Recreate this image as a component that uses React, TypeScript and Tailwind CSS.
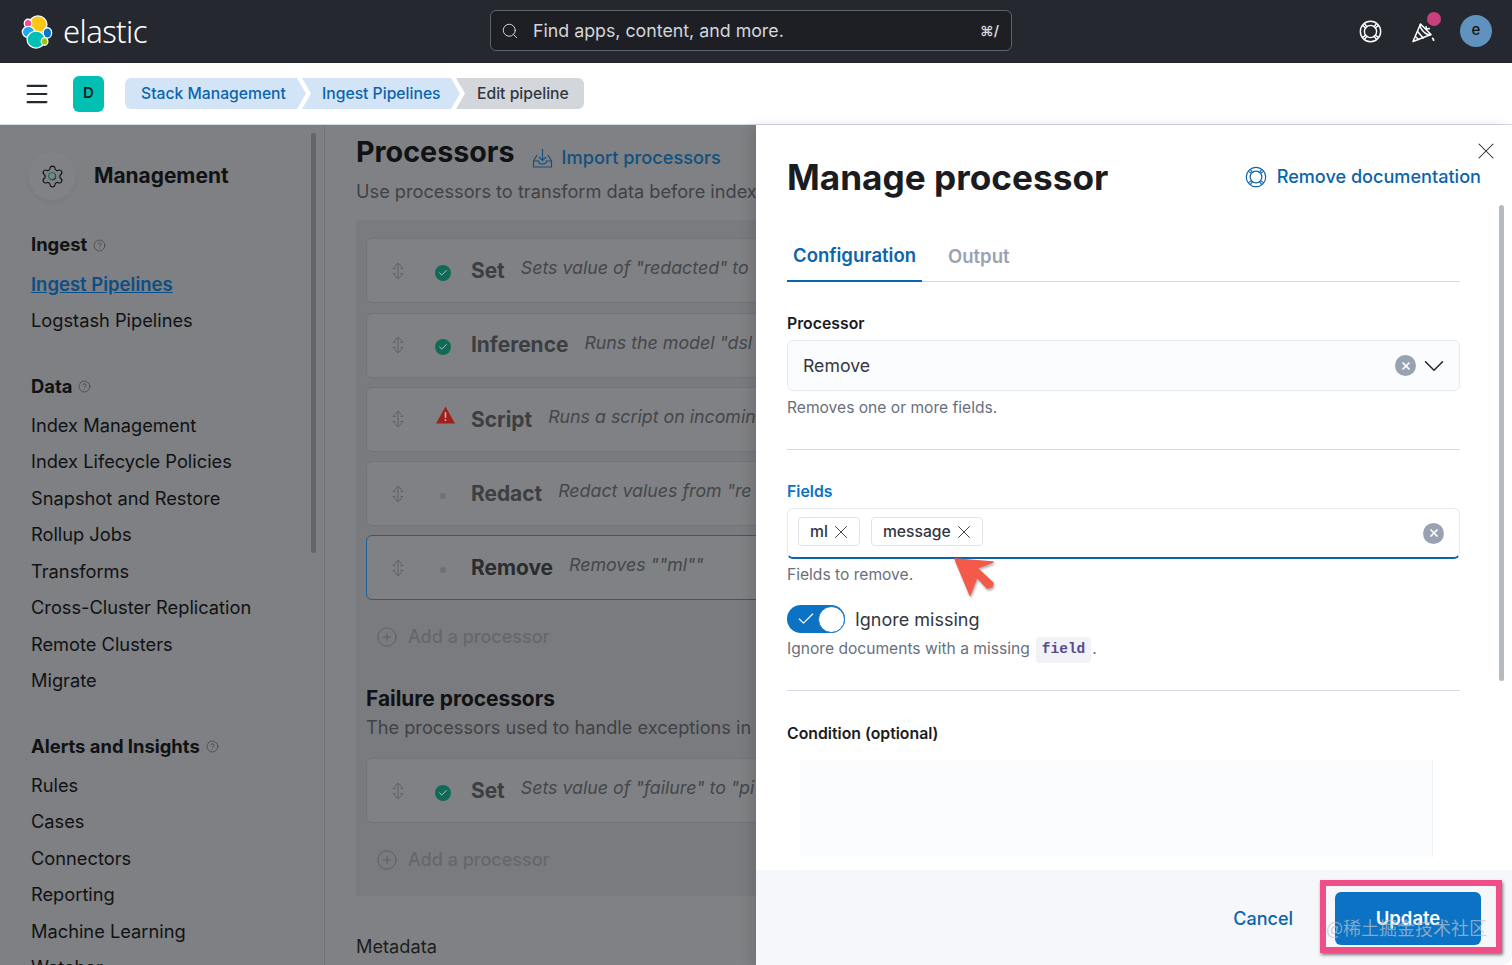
import { Check, ChevronDown, CircleHelp, CirclePlus, Menu, Search, Settings, X } from "lucide-react";

const sidebarGroups = [
  { title: "Ingest", items: ["Ingest Pipelines", "Logstash Pipelines"] },
  {
    title: "Data",
    items: [
      "Index Management",
      "Index Lifecycle Policies",
      "Snapshot and Restore",
      "Rollup Jobs",
      "Transforms",
      "Cross-Cluster Replication",
      "Remote Clusters",
      "Migrate",
    ],
  },
  {
    title: "Alerts and Insights",
    items: ["Rules", "Cases", "Connectors", "Reporting", "Machine Learning", "Watcher"],
  },
];

const processors = [
  { name: "Set", desc: 'Sets value of "redacted" to', status: "ok" },
  { name: "Inference", desc: 'Runs the model "dsl', status: "ok" },
  { name: "Script", desc: "Runs a script on incoming", status: "warn" },
  { name: "Redact", desc: 'Redact values from "re', status: "idle" },
  { name: "Remove", desc: 'Removes ""ml""', status: "idle", selected: true },
];

function ElasticLogo() {
  return (
    <svg width="32" height="34" viewBox="0 0 32 36" className="shrink-0">
      <g stroke="#fff" strokeWidth="1.4">
        <ellipse cx="17" cy="10" rx="9.5" ry="9" fill="#fec514" />
        <ellipse cx="6.5" cy="9" rx="4" ry="4.5" fill="#f04e98" />
        <ellipse cx="7" cy="18" rx="6.5" ry="6" fill="#1ba9f5" />
        <ellipse cx="27" cy="19" rx="4.5" ry="5.5" fill="#0077cc" />
        <ellipse cx="15" cy="26" rx="9.5" ry="9" fill="#00bfb3" />
        <ellipse cx="24" cy="28" rx="3.5" ry="4" fill="#93c90e" />
      </g>
    </svg>
  );
}

function LifeRing({ size, width = 1.5 }: { size: number; width?: number }) {
  return (
    <svg width={size} height={size} viewBox="0 0 24 24" fill="none" stroke="currentColor" strokeWidth={width}>
      <circle cx="12" cy="12" r="10.6" />
      <circle cx="12" cy="12" r="6.4" />
      <path d="M5.6 3.6 L8.6 7.4 M3.6 5.6 L7.4 8.6 M18.4 3.6 L15.4 7.4 M20.4 5.6 L16.6 8.6 M5.6 20.4 L8.6 16.6 M3.6 18.4 L7.4 15.4 M18.4 20.4 L15.4 16.6 M20.4 18.4 L16.6 15.4" />
    </svg>
  );
}

function CheerIcon() {
  return (
    <svg width="24" height="24" viewBox="0 0 24 24" fill="none" stroke="#fff" strokeWidth="1.5" strokeLinejoin="round">
      <path d="M2 21.5 L9.5 4 L20 14.5 Z" />
      <path d="M6.6 11.5 L12.6 18.4 M4.4 16.5 L8 20 M9.5 4 Q8 8 14 13 Q18 15.5 20 14.5" />
      <path d="M15 6 L15.5 9 L19 8.5 M21 18 Q23 19 22.5 21" />
    </svg>
  );
}

function ImportIcon() {
  return (
    <svg width="21" height="20" viewBox="0 0 21 20" fill="none" stroke="#12507f" strokeWidth="1.1" className="shrink-0">
      <path d="M5 7 L1.5 13 V19 H19.5 V13 L16 7" />
      <path d="M1.5 13 H6.5 Q6.5 16 10.5 16 Q14.5 16 14.5 13 H19.5" />
      <path d="M10.5 1 V12.5 M7 9 L10.5 12.5 L14 9" />
    </svg>
  );
}

function StatusIcon({ status }: { status: string }) {
  if (status === "ok") {
    return (
      <span className="flex h-4 w-4 items-center justify-center rounded-full bg-[#0f6b57]">
        <Check size={10} strokeWidth={2} className="text-[#c9d6d2]" />
      </span>
    );
  }
  if (status === "warn") {
    return (
      <svg width="20" height="18" viewBox="0 0 20 18" className="-translate-y-[6px] translate-x-[3px]">
        <path d="M10 0 L20 18 H0 Z" fill="#a01f1f" />
        <rect x="9.2" y="6" width="1.6" height="6" fill="#d8b0b0" />
        <rect x="9.2" y="13.5" width="1.6" height="1.8" fill="#d8b0b0" />
      </svg>
    );
  }
  return (
    <span className="flex h-4 w-4 items-center justify-center">
      <span className="h-1.5 w-1.5 rounded-full bg-[#6e7175]" />
    </span>
  );
}

function DragHandle() {
  return (
    <svg width="14" height="18" viewBox="0 0 14 18" fill="none" stroke="#5f6266" strokeWidth="1">
      <path d="M7 1 V17 M7 1 L2 6.5 M7 1 L12 6.5 M7 17 L2 11.5 M7 17 L12 11.5 M2 6.5 H4.5 M9.5 6.5 H12 M2 11.5 H4.5 M9.5 11.5 H12" />
    </svg>
  );
}

function ProcessorCard({ name, desc, status, selected }: { name: string; desc: string; status: string; selected?: boolean }) {
  return (
    <div
      className={`flex h-[65px] w-[460px] items-center rounded-l-md border bg-[#808184] pl-[24px] ${
        selected ? "border-[#1d5f96]" : "border-[#737477]"
      }`}
    >
      <DragHandle />
      <span className="ml-[28px] flex w-[19px] translate-y-[2px] justify-center">
        <StatusIcon status={status} />
      </span>
      <span className={`ml-[19px] text-[20.9px] font-bold ${selected ? "text-[#2a2c2f]" : "text-[#3c3f42]"}`}>{name}</span>
      <span className="ml-4 -translate-y-[2px] whitespace-nowrap text-[17.8px] italic text-[#44474b]">{desc}</span>
    </div>
  );
}

function AddProcessor() {
  return (
    <div className="flex items-center gap-[10px] pl-[10px] text-[18px] font-medium text-[#66676a]">
      <CirclePlus size={22} strokeWidth={1} className="text-[#5c5d60]" />
      Add a processor
    </div>
  );
}

function ClearButton() {
  return (
    <span className="flex h-[21px] w-[21px] items-center justify-center rounded-full bg-[#98a2b3]">
      <X size={12} strokeWidth={3.5} className="text-white" />
    </span>
  );
}

function Pill({ label }: { label: string }) {
  return (
    <span className="mb-[3px] flex h-[29px] items-center gap-[7px] rounded border border-[#dfe3ea] bg-white pl-[11px] pr-[12px] text-[15.7px] font-medium text-[#343741]">
      {label}
      <X size={22} strokeWidth={1} className="-mx-[5px]" />
    </span>
  );
}

export default function App() {
  return (
    <div className="relative flex h-[965px] w-[1512px] flex-col overflow-hidden bg-[#111] font-[Inter,sans-serif]">
      {/* Top bar */}
      <header className="flex h-[63px] shrink-0 items-center bg-[#25282f] pl-[21px] pr-[20px]">
        <div className="flex w-[469px] items-center gap-[10px]">
          <ElasticLogo />
          <span className="font-['Noto_Sans',sans-serif] text-[31px] font-light leading-none tracking-[-0.6px] text-white">elastic</span>
        </div>
        <div className="-mt-[2px] flex h-[41px] w-[522px] items-center rounded-md border border-[#5e636b] bg-[#1d1f25] pl-[10px] pr-[12px] text-[#d4d6db]">
          <Search size={18} strokeWidth={1.3} />
          <span className="ml-[14px] flex-1 translate-y-[1px] text-[17.8px]">Find apps, content, and more.</span>
          <span className="text-[14px] font-semibold">⌘/</span>
        </div>
        <div className="ml-auto flex items-center text-white">
          <LifeRing size={23} />
          <div className="relative ml-[29px]">
            <CheerIcon />
            <span className="absolute -right-[6px] -top-[8px] h-[14px] w-[14px] rounded-full bg-[#c9407e]" />
          </div>
          <span className="-mt-[2px] ml-[25px] flex h-8 w-8 items-center justify-center rounded-full bg-[#6092c0] text-[15px] font-medium text-[#0f1114]">e</span>
        </div>
      </header>

      {/* Breadcrumbs */}
      <div className="flex h-[62px] shrink-0 items-center border-b border-[#d3dae6] bg-white pl-[23px]">
        <Menu size={28} strokeWidth={1.9} className="text-[#25282f]" />
        <span className="ml-[22px] flex h-9 w-[31px] items-center justify-center rounded-md bg-[#00bfb3] text-[15px] font-semibold text-[#0a1f21]">D</span>
        <nav className="ml-[21px] flex h-[31px] items-center text-[15.7px] font-medium">
          <span className="flex h-full w-[181px] items-center rounded-l-md bg-[#d3e4f6] pl-4 text-[#0b64ac] [clip-path:polygon(0_0,calc(100%-9px)_0,100%_50%,calc(100%-9px)_100%,0_100%)]">
            Stack Management
          </span>
          <span className="-ml-[4px] flex h-full w-[158px] items-center bg-[#d3e4f6] pl-[20px] text-[#0b64ac] [clip-path:polygon(0_0,calc(100%-9px)_0,100%_50%,calc(100%-9px)_100%,0_100%,9px_50%)]">
            Ingest Pipelines
          </span>
          <span className="-ml-[4px] flex h-full w-[128px] items-center rounded-r-md bg-[#d3d6db] pl-[21px] text-[#343741] [clip-path:polygon(0_0,100%_0,100%_100%,0_100%,9px_50%)]">
            Edit pipeline
          </span>
        </nav>
      </div>

      <div className="flex min-h-0 flex-1">
        {/* Management sidebar */}
        <aside className="relative w-[325px] shrink-0 overflow-hidden border-r border-[#737477] bg-[#7e8083] pl-[31px] text-[#101214]">
          <div className="mt-[27px] flex items-center">
            <span className="relative -ml-[3px] flex h-[48px] w-[48px] items-center justify-center rounded-full bg-[#818285] shadow-[0_2px_5px_rgba(0,0,0,0.06)]">
              <Settings size={25} strokeWidth={1.1} />
              <span className="absolute left-[20px] top-[20px] h-[8px] w-[8px] rounded-full border-[1.5px] border-[#0f6b57] bg-[#818285]" />
            </span>
            <span className="ml-[18px] text-[20.9px] font-bold">Management</span>
          </div>
          {sidebarGroups.map((group, g) => (
            <div key={group.title} className={g === 0 ? "mt-[32px]" : "mt-[30px]"}>
              <div className="flex h-[26px] items-center gap-[6px] text-[18.4px] font-bold">
                {group.title}
                <CircleHelp size={13} strokeWidth={1.2} className="text-[#3a3d41]" />
              </div>
              <ul className="mt-[12.5px]">
                {group.items.map((item) => (
                  <li
                    key={item}
                    className={`h-[36.45px] leading-[26px] ${
                      item === "Ingest Pipelines" ? "text-[18.5px] font-semibold text-[#0d4f85] underline" : "text-[18.25px]"
                    }`}
                  >
                    {item}
                  </li>
                ))}
              </ul>
            </div>
          ))}
          <span className="absolute left-[311px] top-[8px] h-[420px] w-[5px] rounded-full bg-[#636669]" />
        </aside>

        {/* Pipeline editor behind the flyout */}
        <main className="min-w-0 flex-1 overflow-hidden bg-[#808184] pl-[31px]">
          <div className="mt-[8px] flex items-center">
            <h2 className="text-[28.7px] font-bold leading-[38px] text-[#101214]">Processors</h2>
            <span className="ml-[17px] mt-[11px]">
              <ImportIcon />
            </span>
            <span className="ml-[9px] mt-[11px] text-[18.2px] font-medium text-[#12507f]">Import processors</span>
          </div>
          <p className="mt-[7px] whitespace-nowrap text-[18.2px] leading-[26px] text-[#3f4246]">
            Use processors to transform data before indexing.
          </p>
          <div className="mt-[16px] w-[460px] bg-[#7a7b7e] pb-[24px] pl-[10px] pt-[18px]">
            <div className="flex flex-col gap-[9.25px]">
              {processors.map((p) => (
                <ProcessorCard key={p.name} {...p} />
              ))}
            </div>
            <div className="mt-[23px] h-[26px]">
              <AddProcessor />
            </div>
            <h3 className="mt-[37px] text-[20.9px] font-bold leading-[26px] text-[#101214]">Failure processors</h3>
            <p className="mt-[2px] whitespace-nowrap text-[18.2px] leading-[26px] text-[#3f4246]">
              The processors used to handle exceptions in this pipeline.
            </p>
            <div className="mt-[18px]">
              <ProcessorCard name="Set" desc={'Sets value of "failure" to "pi'} status="ok" />
            </div>
            <div className="mt-[23px] h-[26px]">
              <AddProcessor />
            </div>
          </div>
          <p className="mt-[37px] text-[18.2px] text-[#1c1e21]">Metadata</p>
        </main>

        {/* Flyout */}
        <section className="relative flex w-[756px] shrink-0 flex-col bg-white text-[#343741] shadow-[-6px_0_10px_rgba(0,0,0,0.1)]">
          <X size={28} strokeWidth={0.9} className="absolute right-[12px] top-[12px] text-[#25282f]" />
          <div className="min-h-0 flex-1 overflow-hidden pl-[31px] pr-[52px]">
            <div className="mt-[26px] flex items-center justify-between">
              <h1 className="text-[35.2px] font-bold leading-[52px] text-[#1a1c21]">Manage processor</h1>
              <a className="-mr-[21px] flex items-center gap-[10px] text-[18.1px] font-medium text-[#0b64ac]">
                <LifeRing size={22} width={1.3} />
                Remove documentation
              </a>
            </div>
            <div className="mt-[29px] flex h-[50px] items-center gap-[22px] border-b border-[#d3dae6]">
              <span className="-mb-px flex h-[50px] items-center border-b-2 border-[#0b64ac] px-[6px] text-[18.5px] font-semibold text-[#0b64ac]">
                Configuration
              </span>
              <span className="ml-[4px] text-[18.5px] font-semibold text-[#98a2b3]">Output</span>
            </div>

            <div className="mt-[31px] translate-y-[1px] text-[15.8px] font-semibold leading-5 text-[#1a1c21]">Processor</div>
            <div className="mt-[7px] flex h-[51px] items-center rounded-md border border-[#e6e9f0] bg-[#fbfcfd] pl-[15px] pr-[8px]">
              <span className="flex-1 translate-y-[1px] text-[17.7px] text-[#343741]">Remove</span>
              <ClearButton />
              <ChevronDown size={34} strokeWidth={1.1} className="ml-[1px] text-[#25282f]" />
            </div>
            <p className="mt-[6px] translate-y-[1px] text-[15.6px] leading-5 text-[#69707d]">Removes one or more fields.</p>
            <div className="mt-[32px] border-t border-[#d3dae6]" />

            <div className="mt-[31px] translate-y-[1px] text-[15.8px] font-semibold leading-5 text-[#0b72c4]">Fields</div>
            <div className="mt-[7px] flex h-[51px] items-center gap-[11px] rounded-md border border-b-2 border-[#e6e9f0] border-b-[#0b64ac] bg-white pl-[10px] pr-[15px]">
              <Pill label="ml" />
              <Pill label="message" />
              <span className="ml-auto">
                <ClearButton />
              </span>
            </div>
            <p className="mt-[6px] text-[15.6px] leading-5 text-[#69707d]">Fields to remove.</p>

            <div className="mt-[20px] flex items-center gap-[10px]">
              <span className="flex h-[28px] w-[58px] items-center rounded-full bg-[#0b72c4] pl-[9px]">
                <Check size={20} strokeWidth={1.4} className="text-white" />
                <span className="ml-[2px] h-[27px] w-[27px] rounded-full border border-[#0b72c4] bg-white" />
              </span>
              <span className="text-[18px] text-[#343741]">Ignore missing</span>
            </div>
            <p className="mt-[3px] flex h-[26px] items-center text-[15.6px] text-[#69707d]">
              Ignore documents with a missing
              <code className="ml-[6px] translate-y-[1px] rounded bg-[#f1f1f8] px-[6px] py-[2px] font-['Liberation_Mono',monospace] text-[14.5px] font-bold text-[#5a4a8c]">field</code>
              <span className="ml-[1px]">.</span>
            </p>
            <div className="mt-[28px] border-t border-[#d3dae6]" />

            <div className="mt-[33px] text-[15.8px] font-semibold leading-5 text-[#1a1c21]">Condition (optional)</div>
            <div className="ml-[13px] mt-[16px] h-[97px] w-[633px] border-r border-[#eef0f4] bg-[#fbfcfd]" />
          </div>
          <span className="absolute right-[8px] top-[80px] h-[476px] w-[5px] rounded-full bg-[#b6b9be]" />

          <footer className="flex h-[95px] shrink-0 items-center justify-end rounded-br-[10px] bg-[#f5f7fa] pr-[31px] pt-[2px]">
            <span className="text-[18px] font-medium text-[#0b64ac]">Cancel</span>
            <button className="ml-[42px] h-[53px] w-[146px] rounded-md bg-[#0b72c4] text-[18.5px] font-semibold text-white">Update</button>
          </footer>
        </section>
      </div>

      {/* Annotations drawn on top of the screenshot */}
      <svg width="48" height="44" viewBox="0 0 48 44" className="absolute left-[952px] top-[556px] drop-shadow-[1px_2px_1px_rgba(0,0,0,0.3)]">
        <path d="M3 3 L41 6 L25 12 L41 27 Q41 32 35 32 L25 21 L18 39 Z" fill="#f35a4a" stroke="#f35a4a" strokeWidth="1.5" strokeLinejoin="round" />
      </svg>
      <div className="absolute left-[1320px] top-[880px] h-[73px] w-[182px] border-[6px] border-[#ef4f86] shadow-[1px_2px_3px_rgba(0,0,0,0.5)]" />
      <span className="absolute left-[1326px] top-[914px] font-['Noto_Sans_CJK_SC',sans-serif] text-[18px] text-[rgba(190,195,205,0.7)]">@稀土掘金技术社区</span>
    </div>
  );
}
